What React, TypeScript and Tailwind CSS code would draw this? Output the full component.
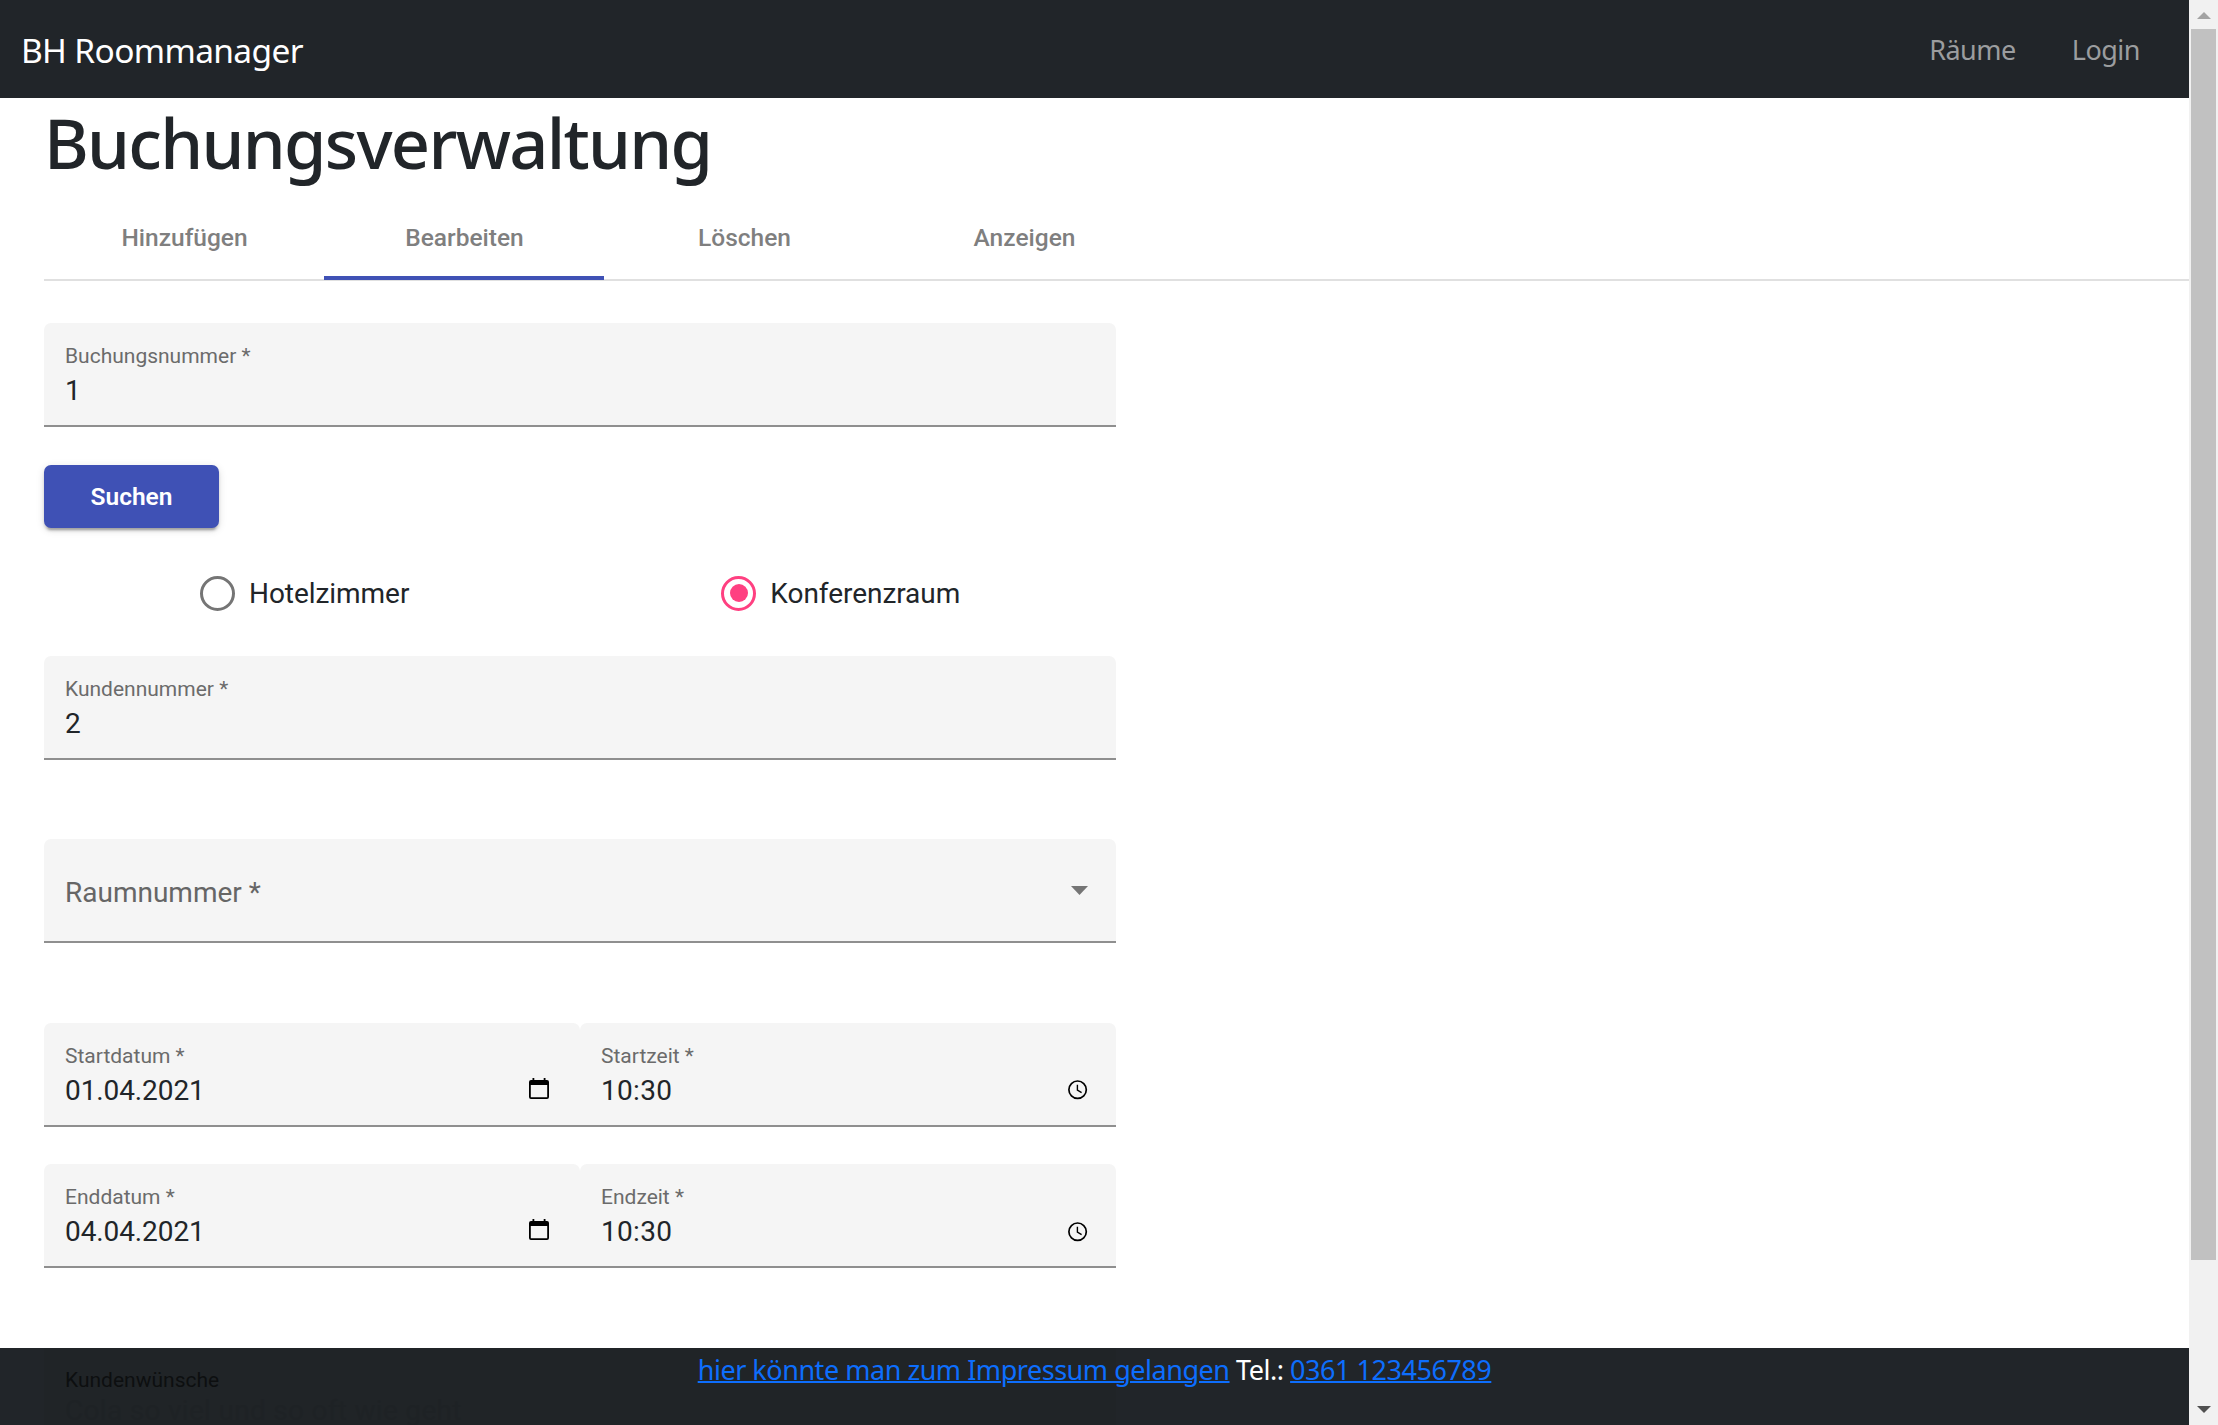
import React from 'react';

function CalendarIcon() {
  return (
    <svg className="h-[21px] w-[20px]" viewBox="0 0 20 21" fill="#000">
      <path fillRule="evenodd" d="M3.5 0h1.8v2h9.4V0h1.8v2H18a2 2 0 0 1 2 2v15a2 2 0 0 1-2 2H2a2 2 0 0 1-2-2V4a2 2 0 0 1 2-2h1.500zM1.800 7v12.200h16.400V7z" />
    </svg>
  );
}

function ClockIcon() {
  return (
    <svg className="h-5 w-5" viewBox="0 0 20 20" fill="none" stroke="#000">
      <circle cx="9.6" cy="9.7" r="8.7" strokeWidth="1.7" />
      <path d="M9.4 4.800v5.400l4.200 2.500" strokeWidth="1.4" />
    </svg>
  );
}

function Field({ label, value, icon, className = '' }: { label: string; value?: string; icon?: React.ReactNode; className?: string }) {
  return (
    <div className={`flex h-[104px] rounded-t-[7px] border-b-2 border-[#8f8f8f] bg-[#f5f5f5] pl-[21px] ${className}`}>
      <div className="flex flex-1 flex-col pt-[20px]">
        <span className="h-[29px] text-[21px] leading-[26px] tracking-normal text-[#6b6b6b]">{label}</span>
        <span className="text-[28px] leading-[38px] text-[#212529]">{value}</span>
      </div>
      {icon}
    </div>
  );
}

function Radio({ label, checked }: { label: string; checked?: boolean }) {
  return (
    <div className="flex items-center gap-[14px] text-[28px] leading-[36px] tracking-[-0.05px] text-[#212529]">
      <span className={`flex size-[35px] items-center justify-center rounded-full border-[3px] ${checked ? 'border-[#ff4081]' : 'border-[#757575]'}`}>
        {checked && <span className="size-[17.5px] rounded-full bg-[#ff4081]" />}
      </span>
      <span className="pt-[2px]">{label}</span>
    </div>
  );
}

export default function App() {
  return (
    <div className="flex h-[1425px] w-[2218px] overflow-hidden bg-white font-[Roboto,sans-serif]">
      <div className="relative h-full w-[2189px] overflow-hidden">
        <header className="flex h-[98px] items-center justify-between bg-[#212529] pr-[49px] pl-[21px] font-['Noto_Sans',sans-serif]">
          <span className="pt-[2px] text-[33.5px] tracking-[-0.65px] text-white">BH Roommanager</span>
          <nav className="flex gap-[56px] pt-[3px] text-[27px] tracking-[-0.5px] text-[#9b9d9f]">
            <span>Räume</span>
            <span>Login</span>
          </nav>
        </header>
        <main className="pl-[44px]">
          <h1 className="h-[105px] pt-[5px] font-['Noto_Sans',sans-serif] text-[68.5px] leading-[80px] font-medium tracking-[-1.7px] text-[#212529]">Buchungsverwaltung</h1>
          <div className="flex h-[78px] border-b-2 border-[#e0e0e0] text-[24.5px] font-medium text-[#7f7f7f]">
            {['Hinzufügen', 'Bearbeiten', 'Löschen', 'Anzeigen'].map((t, i) => (
              <div key={t} className={`-mb-px flex w-[280px] justify-center border-b-4 pt-[15px] pl-px leading-[40px] ${i === 1 ? 'border-[#3f51b5]' : 'border-transparent'}`}>{t}</div>
            ))}
          </div>
          <form className="w-[1072px] pt-[42px]">
            <Field label="Buchungsnummer *" value="1" />
            <button type="button" className="mt-[38px] block h-[63px] w-[175px] rounded-[7px] bg-[#3f51b5] pt-[2px] text-[24.5px] font-semibold text-white shadow-[0_5px_2px_-3px_rgba(0,0,0,0.2),0_3px_3px_rgba(0,0,0,0.14),0_2px_8px_rgba(0,0,0,0.12)]">Suchen</button>
            <div className="mt-[47px] flex h-[36px] gap-[312px] pl-[156px]">
              <Radio label="Hotelzimmer" />
              <Radio label="Konferenzraum" checked />
            </div>
            <Field label="Kundennummer *" value="2" className="mt-[45px]" />
            <div className="mt-[79px] flex h-[104px] items-center justify-between rounded-t-[7px] border-b-2 border-[#8f8f8f] bg-[#f5f5f5] pr-[28px] pl-[21px] text-[28px] text-[#666]">
              <span className="pt-[5px]">Raumnummer *</span>
              <svg className="h-[9px] w-[17px]" viewBox="0 0 17 9" fill="#757575"><path d="M0 0h17L8.500 9z" /></svg>
            </div>
            <div className="mt-[80px] flex">
              <Field label="Startdatum *" value="01.04.2021" className="w-1/2 pr-[31px] tracking-[-0.1px]" icon={<span className="pt-[55px]"><CalendarIcon /></span>} />
              <Field label="Startzeit *" value="10:30" className="w-1/2 pr-[28px] tracking-[0.3px]" icon={<span className="pt-[57px]"><ClockIcon /></span>} />
            </div>
            <div className="mt-[37px] flex">
              <Field label="Enddatum *" value="04.04.2021" className="w-1/2 pr-[31px] tracking-[-0.1px]" icon={<span className="pt-[55px]"><CalendarIcon /></span>} />
              <Field label="Endzeit *" value="10:30" className="w-1/2 pr-[28px] tracking-[0.3px]" icon={<span className="pt-[58px]"><ClockIcon /></span>} />
            </div>
          </form>
        </main>
        <footer className="absolute bottom-0 left-0 h-[77px] w-full bg-[#212529]">
          <div className="ml-[44px] h-full w-[1072px] bg-[#202427] pt-[19px] pl-[21px] text-[21px] leading-[26px] text-[#0d0f10]">
            <div className="h-[29px]">Kundenwünsche</div>
            <div className="text-[28px] leading-[29px] tracking-[0.3px] text-[#1e2225]">Cola so viel und so oft wie geht</div>
          </div>
          <div className="absolute top-0 left-0 w-full text-center font-['Noto_Sans',sans-serif] text-[27px] leading-[43px] tracking-[-0.47px] text-white">
            <a className="text-[#0d6efd] underline decoration-2">hier könnte man zum Impressum gelangen</a> Tel.: <a className="text-[#0d6efd] underline decoration-2">0361 123456789</a>
          </div>
        </footer>
      </div>
      <div className="flex w-[29px] flex-col items-center bg-[#f1f1f1]">
        <svg className="mt-[12px] h-[7px] w-[14px]" viewBox="0 0 14 7" fill="#a3a3a3"><path d="M0 7h14L7 0z" /></svg>
        <div className="mt-[10px] h-[1231px] w-[25px] bg-[#c1c1c1]" />
        <svg className="mt-[146px] h-[7px] w-[14px]" viewBox="0 0 14 7" fill="#505050"><path d="M0 0h14L7 7z" /></svg>
      </div>
    </div>
  );
}
